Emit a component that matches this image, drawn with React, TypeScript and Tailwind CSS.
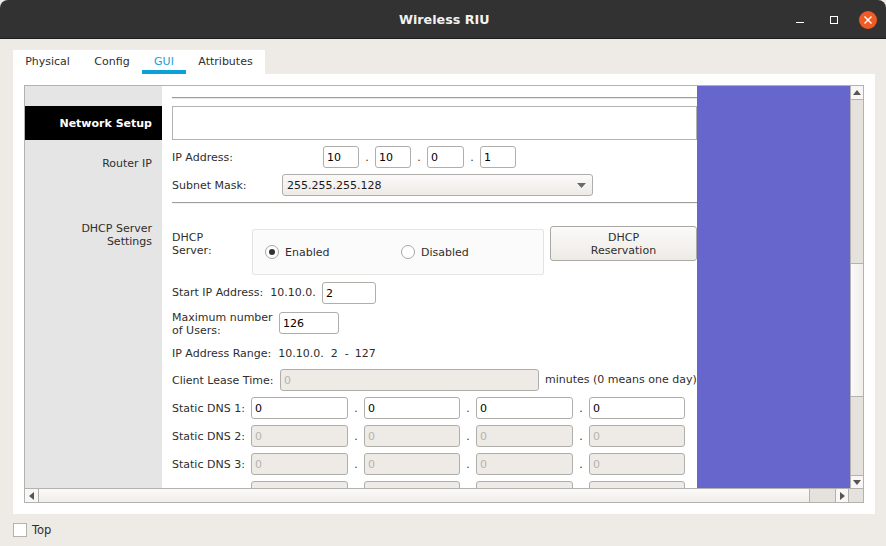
import React from "react";

const Field = ({ w, value, disabled }: { w: string; value: string; disabled?: boolean }) => (
  <div className={`${w} h-[22px] shrink-0 rounded-[3px] border border-[#b0aeaa] px-[3px] leading-[21px] text-[11px] ${disabled ? "bg-[#eeebe6] text-[#b5b3af]" : "bg-white text-black"}`}>
    {value}
  </div>
);

const Tab = ({ label, active, cls }: { label: string; active?: boolean; cls: string }) => (
  <div className={`${cls} h-[24px] text-center text-[11px] leading-[23px] ${active ? "border-b-[4px] border-[#0ea0d8] text-[#1a9fd6]" : "text-[#2e2e2e]"}`}>{label}</div>
);

const DnsRow = ({ label, disabled, cls }: { label: string; disabled?: boolean; cls: string }) => (
  <div className={`${cls} flex h-[22px] items-center`}>
    <div className="w-[79px] shrink-0 whitespace-nowrap pt-[2px]">{label}</div>
    <Field w="w-[97px]" value="0" disabled={disabled} />
    <div className="w-[16px] pt-[2px] text-center">.</div>
    <Field w="w-[96px]" value="0" disabled={disabled} />
    <div className="w-[16px] pt-[2px] text-center">.</div>
    <Field w="w-[97px]" value="0" disabled={disabled} />
    <div className="w-[16px] pt-[2px] text-center">.</div>
    <Field w="w-[96px]" value="0" disabled={disabled} />
  </div>
);

export default function App() {
  return (
    <div className="flex h-[546px] w-[886px] flex-col overflow-hidden bg-[#eeebe6] font-['DejaVu_Sans',sans-serif] text-[11px] text-[#2e2e2e]">
      <div className="flex h-[39px] shrink-0 items-center rounded-t-[8px] border-b border-[#1d1d1d] bg-[#333232] pt-[1px] pl-[399px] pr-[7px]">
        <div className="w-[92px] whitespace-nowrap text-[12.7px] font-bold text-[#f2f2f2]">Wireless RIU</div>
        <div className="ml-[305px] mt-[6px] h-[1px] w-[8px] bg-white" />
        <div className="ml-[26px] h-[8px] w-[8px] border border-white" />
        <div className="ml-[21px] flex h-[18px] w-[18px] items-center justify-center rounded-full bg-[#ef5b24]">
          <svg width="10" height="10" viewBox="0 0 10 10"><path d="M1.5 1.5 8.5 8.5M8.5 1.5 1.5 8.5" stroke="#fff" strokeWidth="1.4" /></svg>
        </div>
      </div>

      <div className="ml-[13px] mt-[11px] flex h-[24px] w-[252px] bg-white">
        <Tab label="Physical" cls="w-[69px]" />
        <Tab label="Config" cls="w-[60px]" />
        <Tab label="GUI" active cls="w-[44px]" />
        <Tab label="Attributes" cls="w-[79px]" />
      </div>

      <div className="ml-[13px] h-[440px] w-[862px] bg-white px-[11px] py-[11px]">
        <div className="flex h-[418px] w-[840px] flex-col border border-[#b4b2ae]">
          <div className="flex min-h-0 flex-1">
            <div className="flex w-[137px] shrink-0 flex-col bg-[#e5e5e5] text-right">
              <div className="mt-[20px] h-[34px] bg-black pr-[10px] font-bold leading-[35px] text-white">Network Setup</div>
              <div className="mt-[17px] pr-[10px] leading-[13px]">Router IP</div>
              <div className="mt-[52px] pr-[10px] leading-[13px]">DHCP Server<br />Settings</div>
            </div>

            <div className="w-[535px] shrink-0 overflow-hidden bg-white pl-[10px]">
              <div className="mt-[11px] h-[2px] w-[525px] border-t border-[#a09e9a] bg-[#e8e8e8]" />
              <div className="mt-[7px] h-[34px] w-[525px] border border-[#b4b2ae]" />
              <div className="mt-[6px] flex h-[22px] items-center">
                <div className="w-[151px] shrink-0 pt-[2px]">IP Address:</div>
                <Field w="w-[36px]" value="10" />
                <div className="w-[16px] pt-[2px] text-center">.</div>
                <Field w="w-[36px]" value="10" />
                <div className="w-[16px] pt-[2px] text-center">.</div>
                <Field w="w-[37px]" value="0" />
                <div className="w-[16px] pt-[2px] text-center">.</div>
                <Field w="w-[36px]" value="1" />
              </div>
              <div className="mt-[6px] flex h-[22px] items-center">
                <div className="w-[110px] shrink-0 pt-[2px]">Subnet Mask:</div>
                <div className="flex h-[22px] w-[311px] items-center justify-between rounded-[3px] border border-[#b0aeaa] bg-gradient-to-b from-[#fbfaf9] to-[#eeebe6] pl-[4px] pr-[6px]">
                  <span className="pt-[2px] text-[#1a1a1a]">255.255.255.128</span>
                  <svg width="9" height="5" viewBox="0 0 9 5"><path d="M0 0h9L4.5 5z" fill="#6a6a6a" /></svg>
                </div>
              </div>
              <div className="mt-[6px] h-[2px] w-[525px] border-t border-[#a09e9a] bg-[#f2f2f2]" />

              <div className="mt-[22px] flex h-[49px] items-start">
                <div className="mt-[5px] w-[80px] shrink-0 leading-[13px]">DHCP<br />Server:</div>
                <div className="mt-[3px] flex h-[46px] w-[292px] shrink-0 items-center rounded-[2px] border border-[#e6e4e1] bg-[#fbfbfb] pl-[12px]">
                  <div className="flex h-[14px] w-[14px] items-center justify-center rounded-full border border-[#a8a6a2] bg-white">
                    <div className="h-[6px] w-[6px] rounded-full bg-[#333]" />
                  </div>
                  <span className="ml-[6px] w-[116px] pt-[2px]">Enabled</span>
                  <div className="h-[14px] w-[14px] rounded-full border border-[#a8a6a2] bg-white" />
                  <span className="ml-[6px] pt-[2px]">Disabled</span>
                </div>
                <div className="ml-[6px] flex h-[35px] w-[147px] shrink-0 items-center justify-center rounded-[3px] border border-[#aaa8a4] bg-gradient-to-b from-[#fbfaf9] to-[#eeebe6] text-center leading-[13px]">DHCP<br />Reservation</div>
              </div>

              <div className="mt-[7px] flex h-[22px] items-center">
                <div className="w-[150px] shrink-0 whitespace-nowrap">Start IP Address:<span className="ml-[7px]">10.10.0.</span></div>
                <Field w="w-[54px]" value="2" />
              </div>
              <div className="mt-[6px] flex h-[26px] items-center">
                <div className="w-[107px] shrink-0 pt-[2px] leading-[13px]">Maximum number<br />of Users:</div>
                <Field w="w-[60px]" value="126" />
              </div>
              <div className="mt-[11px] flex h-[14px] items-center whitespace-pre leading-[14px]">
                <span>IP Address Range:</span>
                <span className="ml-[7px]">10.10.0.</span>
                <span className="ml-[7px]">2</span>
                <span className="ml-[7px]">-</span>
                <span className="ml-[6px]">127</span>
              </div>
              <div className="mt-[8px] flex h-[22px] items-center">
                <div className="w-[108px] shrink-0 whitespace-nowrap pt-[2px]">Client Lease Time:</div>
                <Field w="w-[259px]" value="0" disabled />
                <div className="ml-[6px] whitespace-nowrap">minutes (0 means one day)</div>
              </div>
              <DnsRow cls="mt-[6px]" label="Static DNS 1:" />
              <DnsRow cls="mt-[6px]" label="Static DNS 2:" disabled />
              <DnsRow cls="mt-[6px]" label="Static DNS 3:" disabled />
              <DnsRow cls="mt-[6px]" label="" disabled />
            </div>

            <div className="w-[153px] shrink-0 bg-[#6666cc]" />

            <div className="flex w-[13px] shrink-0 flex-col border-l border-[#b4b2ae] bg-[#e5e2de]">
              <div className="flex h-[14px] shrink-0 items-center justify-center border-b border-[#b4b2ae] bg-[#f8f7f6]">
                <svg width="8" height="5" viewBox="0 0 8 5"><path d="M4 0 8 5H0z" fill="#555" /></svg>
              </div>
              <div className="mt-[163px] h-[134px] shrink-0 border-y border-[#b4b2ae] bg-gradient-to-r from-[#fbfaf9] to-[#f0eeea]" />
              <div className="flex-1" />
              <div className="flex h-[13px] shrink-0 items-center justify-center border-t border-[#b4b2ae] bg-[#f8f7f6]">
                <svg width="8" height="5" viewBox="0 0 8 5"><path d="M0 0H8L4 5z" fill="#555" /></svg>
              </div>
            </div>
          </div>

          <div className="flex h-[14px] shrink-0 border-t border-[#b4b2ae] bg-[#e5e2de]">
            <div className="flex w-[14px] shrink-0 items-center justify-center border-r border-[#b4b2ae] bg-[#f8f7f6]">
              <svg width="5" height="8" viewBox="0 0 5 8"><path d="M5 0V8L0 4z" fill="#555" /></svg>
            </div>
            <div className="w-[771px] shrink-0 border-r border-[#b4b2ae] bg-gradient-to-b from-[#fbfaf9] to-[#f0eeea]" />
            <div className="w-[25px] shrink-0" />
            <div className="flex w-[14px] shrink-0 items-center justify-center border-x border-[#b4b2ae] bg-[#f8f7f6]">
              <svg width="5" height="8" viewBox="0 0 5 8"><path d="M0 0V8L5 4z" fill="#555" /></svg>
            </div>
            <div className="flex-1" />
          </div>
        </div>
      </div>

      <div className="ml-[13px] mt-[9px] flex h-[14px] items-center">
        <div className="h-[14px] w-[14px] border border-[#b4b2ae] bg-white" />
        <span className="ml-[5px] pt-[1px] text-[11.5px]">Top</span>
      </div>
    </div>
  );
}
